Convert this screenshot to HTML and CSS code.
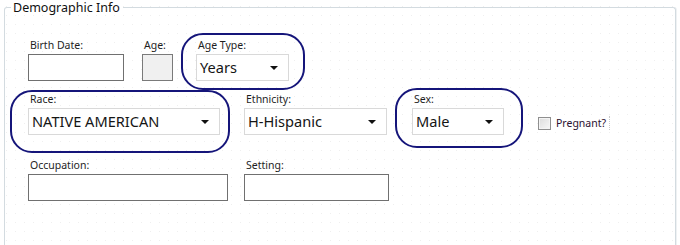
FILE: index.html
```html
<!DOCTYPE html>
<html lang="en">
<head>
<meta charset="UTF-8">
<title>Demographic Info</title>
<link rel="stylesheet" href="styles.css">
</head>
<body>
<fieldset class="group">
    <legend>Demographic Info</legend>
    <div class="fields">
        <div class="row row-first">
            <div class="field w-birth gap-18">
                <label>Birth Date:</label>
                <input type="text" class="textbox">
            </div>
            <div class="field w-age gap-23">
                <label>Age:</label>
                <input type="text" class="textbox readonly">
            </div>
            <div class="field w-agetype marked mark-agetype">
                <label>Age Type:</label>
                <div class="combo">Years<span class="arrow"></span></div>
            </div>
        </div>

        <div class="row row-second">
            <div class="field w-race gap-24 marked mark-race">
                <label>Race:</label>
                <div class="combo">NATIVE AMERICAN<span class="arrow"></span></div>
            </div>
            <div class="field w-ethnicity gap-25">
                <label>Ethnicity:</label>
                <div class="combo">H-Hispanic<span class="arrow"></span></div>
            </div>
            <div class="field w-sex gap-34 marked mark-sex">
                <label>Sex:</label>
                <div class="combo">Male<span class="arrow"></span></div>
            </div>
            <div class="check">
                <span class="box"></span>
                <span class="check-label">Pregnant?</span>
            </div>
        </div>

        <div class="row row-third">
            <div class="field w-occupation gap-16">
                <label>Occupation:</label>
                <input type="text" class="textbox">
            </div>
            <div class="field w-setting">
                <label>Setting:</label>
                <input type="text" class="textbox">
            </div>
        </div>
    </div>
</fieldset>
</body>
</html>
```

FILE: styles.css
```css
html {
    overflow: hidden;
}

body {
    margin: 0;
    padding: 0;
    width: 680px;
    height: 245px;
    overflow: hidden;
    font-family: "Noto Sans", "Open Sans", sans-serif;
    color: #1e1e1e;
    background-color: #fff;
    background-image: radial-gradient(circle, #efefef 0.6px, transparent 0.9px);
    background-size: 9px 9px;
    background-position: 2px 2px;
}

/* Group box */
.group {
    margin: 0 4px;
    padding: 0 0 0 6px;
    height: 245px;
    border: 1px solid #d3dbe0;
    border-bottom: none;
    border-radius: 3px 3px 0 0;
    box-shadow: 1px 0 0 #eef1f3;
    box-sizing: border-box;
    min-width: 0;
}

.group legend {
    padding: 0 3px 0 2px;
    font-size: 12.5px;
    line-height: 15px;
    color: #111;
}

.fields {
    padding: 23px 0 0 17px;
}

.row {
    display: flex;
    align-items: flex-end;
}

.row-second {
    margin-top: 11px;
}

.row-third {
    margin-top: 23px;
}

/* Field = label on top, control under it */
.field {
    position: relative;
    display: flex;
    flex-direction: column;
}

.field label {
    padding-left: 2px;
    font-size: 10.5px;
    line-height: 14px;
    height: 16px;
    color: #1e1e1e;
    white-space: nowrap;
}

.w-birth { width: 96px; }
.w-age { width: 31px; }
.w-agetype { width: 93px; }
.w-race { width: 192px; }
.w-ethnicity { width: 143px; }
.w-sex { width: 92px; }
.w-occupation { width: 200px; }
.w-setting { width: 145px; }

.gap-16 { margin-right: 16px; }
.gap-18 { margin-right: 18px; }
.gap-23 { margin-right: 23px; }
.gap-24 { margin-right: 24px; }
.gap-25 { margin-right: 25px; }
.gap-34 { margin-right: 34px; }

.textbox {
    display: block;
    width: 100%;
    height: 27px;
    margin: 0;
    padding: 0 3px;
    border: 1px solid #707070;
    background: #fff;
    box-sizing: border-box;
    font: inherit;
}

.textbox.readonly {
    background: #f0f0f0;
    border-color: #7a7a7a;
}

.combo {
    position: relative;
    height: 27px;
    padding: 0 0 0 3px;
    border: 1px solid #d9d9d9;
    background: #fff;
    box-sizing: border-box;
    font-size: 14.6px;
    line-height: 25px;
    color: #151515;
    white-space: nowrap;
}

.combo .arrow {
    position: absolute;
    right: 10px;
    top: 11px;
    width: 0;
    height: 0;
    border-left: 4px solid transparent;
    border-right: 4px solid transparent;
    border-top: 4px solid #111;
}

/* Hand-drawn highlight rings over some fields */
.marked::after {
    content: "";
    position: absolute;
    border: 2px solid #15157a;
    border-radius: 22px;
    pointer-events: none;
}

.mark-agetype::after { left: -15px; right: -16px; top: -5px; bottom: -9px; }
.mark-race::after { left: -18px; right: -10px; top: -2px; bottom: -18px; }
.mark-sex::after { left: -17px; right: -19px; top: -4px; bottom: -13px; }

/* Checkbox */
.check {
    display: flex;
    align-items: center;
    margin-bottom: 5px;
}

.check .box {
    width: 11px;
    height: 11px;
    border: 1px solid #8f8f8f;
    background: linear-gradient(135deg, #dcdcdc, #f8f8f8);
    box-shadow: inset 0 0 0 1px #f4f4f4;
}

.check-label {
    margin-left: 5px;
    padding-right: 3px;
    font-size: 10.5px;
    line-height: 14px;
    color: #2a1030;
    border-right: 1px dotted #c8c8c8;
}
```
